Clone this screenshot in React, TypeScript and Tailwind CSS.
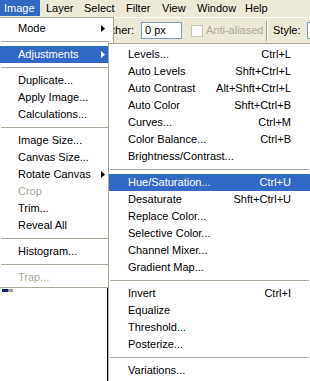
import React from "react";

type Item =
  | { sep: true }
  | { label: string; shortcut?: string; sub?: boolean; disabled?: boolean; active?: boolean };

const imageMenu: Item[] = [
  { label: "Mode", sub: true },
  { sep: true },
  { label: "Adjustments", sub: true, active: true },
  { sep: true },
  { label: "Duplicate..." },
  { label: "Apply Image..." },
  { label: "Calculations..." },
  { sep: true },
  { label: "Image Size..." },
  { label: "Canvas Size..." },
  { label: "Rotate Canvas", sub: true },
  { label: "Crop", disabled: true },
  { label: "Trim..." },
  { label: "Reveal All" },
  { sep: true },
  { label: "Histogram..." },
  { sep: true },
  { label: "Trap...", disabled: true },
];

const adjustMenu: Item[] = [
  { label: "Levels...", shortcut: "Ctrl+L" },
  { label: "Auto Levels", shortcut: "Shft+Ctrl+L" },
  { label: "Auto Contrast", shortcut: "Alt+Shft+Ctrl+L" },
  { label: "Auto Color", shortcut: "Shft+Ctrl+B" },
  { label: "Curves...", shortcut: "Ctrl+M" },
  { label: "Color Balance...", shortcut: "Ctrl+B" },
  { label: "Brightness/Contrast..." },
  { sep: true },
  { label: "Hue/Saturation...", shortcut: "Ctrl+U", active: true },
  { label: "Desaturate", shortcut: "Shft+Ctrl+U" },
  { label: "Replace Color..." },
  { label: "Selective Color..." },
  { label: "Channel Mixer..." },
  { label: "Gradient Map..." },
  { sep: true },
  { label: "Invert", shortcut: "Ctrl+I" },
  { label: "Equalize" },
  { label: "Threshold..." },
  { label: "Posterize..." },
  { sep: true },
  { label: "Variations..." },
];

const Arrow = ({ white }: { white?: boolean }) => (
  <svg width="4" height="7" viewBox="0 0 4 7">
    <polygon points="0,0 4,3.5 0,7" fill={white ? "#ffffff" : "#000000"} />
  </svg>
);

const MenuList = ({ items, padL, padR, sepR }: { items: Item[]; padL: string; padR: string; sepR: string }) => (
  <>
    {items.map((it, i) =>
      "sep" in it ? (
        <div key={i} className="h-[9px] flex items-center">
          <div className={`h-px bg-[#ACA899] ml-[1px] flex-1 ${sepR}`} />
        </div>
      ) : (
        <div
          key={i}
          className={`h-[17px] flex items-center justify-between ${padL} ${padR} ${
            it.active ? "bg-[#316AC5] text-white" : it.disabled ? "text-[#ACA899]" : "text-black"
          }`}
        >
          <span className="whitespace-nowrap">{it.label}</span>
          {it.sub && <Arrow white={it.active} />}
          {it.shortcut && <span className="whitespace-nowrap">{it.shortcut}</span>}
        </div>
      )
    )}
  </>
);

const menuBar = [
  { label: "Image", w: "w-[40px] pl-[4px]" },
  { label: "Layer", w: "w-[39px] pl-[6px]" },
  { label: "Select", w: "w-[41px] pl-[5px]" },
  { label: "Filter", w: "w-[37px] pl-[6px]" },
  { label: "View", w: "w-[34px] pl-[5px]" },
  { label: "Window", w: "w-[48px] pl-[6px]" },
  { label: "Help", w: "w-[50px] pl-[6px]" },
];

export default function App() {
  return (
    <div className="relative w-[310px] h-[381px] overflow-hidden bg-white text-[11px] leading-none font-['Liberation_Sans',Arial,sans-serif]">
      {/* menu bar */}
      <div className="h-[17px] bg-[#ECE9D8] flex">
        {menuBar.map((m, i) => (
          <div
            key={m.label}
            className={`h-[16px] shrink-0 flex items-center ${m.w} ${i === 0 ? "bg-[#316AC5] text-white" : "text-black"}`}
          >
            {m.label}
          </div>
        ))}
      </div>

      {/* options bar */}
      <div className="h-[26px] bg-[#ECE9D8] border-t border-white flex items-center whitespace-nowrap">
        <span className="shrink-0 w-[134px] text-right text-black">Feather:</span>
        <div className="shrink-0 ml-[7px] w-[41px] h-[17px] border border-[#7F9DB9] bg-white flex items-center pl-[3px] text-black">
          0 px
        </div>
        <div className="shrink-0 ml-[9px] w-[12px] h-[12px] border border-[#C9C7BA] bg-white" />
        <span className="shrink-0 ml-[3px] w-[60px] text-[#ACA899]">Anti-aliased</span>
        <div className="shrink-0 w-[2px] h-[20px] border-l border-[#ACA899] border-r border-r-white" />
        <span className="shrink-0 ml-[5px] w-[34px] text-black">Style:</span>
        <div className="shrink-0 w-[30px] h-[17px] border border-[#7F9DB9] bg-white" />
      </div>

      {/* document window edge */}
      <div className="absolute left-[107px] top-[288px] w-px h-[93px] bg-black" />
      <div className="absolute left-[2px] top-[289px] flex h-[3px]">
        <div className="w-[6px] bg-[#0A246A]" />
        <div className="w-[5px] bg-[#9D9DA1]" />
      </div>

      {/* Image menu */}
      <div className="absolute left-[-1px] top-[17px] w-[115px] bg-white border border-[#ACA899] pt-[2px] pb-[1px]">
        <MenuList items={imageMenu} padL="pl-[18px]" padR="pr-[8px]" sepR="mr-[4px]" />
      </div>

      {/* Adjustments submenu */}
      <div className="absolute left-[108px] top-[43px] w-[203px] bg-white border border-[#ACA899] pt-[2px] pb-[2px]">
        <MenuList items={adjustMenu} padL="pl-[19px]" padR="pr-[19px]" sepR="mr-[1px]" />
      </div>
    </div>
  );
}
